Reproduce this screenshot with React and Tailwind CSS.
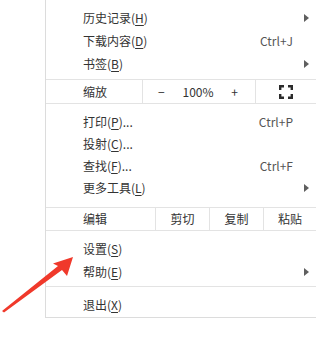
import React from 'react';

const font = { fontFamily: '"Noto Sans CJK SC", "Noto Sans", sans-serif' };

const Label = ({ text, k, dots }) => (
  <span>
    {text}(<span className="underline underline-offset-2">{k}</span>){dots ? '...' : ''}
  </span>
);

const Caret = () => (
  <svg width="5" height="8" viewBox="0 0 5 8" className="absolute right-[7px] top-1/2 -translate-y-1/2">
    <polygon points="0,0 5,4 0,8" fill="#5f5f5f" />
  </svg>
);

const Item = ({ text, k, dots, shortcut, sub, h = 'h-[23px]' }) => (
  <div className={`relative flex items-center justify-between pl-[37px] pr-[23px] ${h}`}>
    <Label text={text} k={k} dots={dots} />
    {shortcut && <span className="text-[#555]">{shortcut}</span>}
    {sub && <Caret />}
  </div>
);

const Sep = () => <div className="h-px bg-[#e3e3e3]" />;

const FullscreenIcon = () => (
  <svg width="14" height="14" viewBox="0 0 14 14" fill="none" stroke="#2b2b2b" strokeWidth="2.4">
    <path d="M1.2 5V1.2H5M9 1.2h3.8V5M12.8 9v3.8H9M5 12.8H1.2V9" />
  </svg>
);

const App = () => {
  return (
    <div className="relative w-[316px] h-[346px] bg-white overflow-hidden text-[12px] text-[#333]" style={font}>
      <div className="ml-[45px] w-[271px] border-l border-b border-[#dcdcdc]">
        <div className="pt-[6px] pb-[4px]">
          <Item text="历史记录" k="H" sub />
          <Item text="下载内容" k="D" shortcut="Ctrl+J" />
          <Item text="书签" k="B" sub />
        </div>
        <Sep />
        <div className="flex h-[23px] items-center">
          <div className="w-[96px] pl-[37px]">缩放</div>
          <div className="flex h-full w-[113px] items-center justify-between border-l border-[#e3e3e3] pl-[15px] pr-[17px]">
            <span>−</span>
            <span>100%</span>
            <span>+</span>
          </div>
          <div className="flex h-full flex-1 items-center justify-center border-l border-[#e3e3e3]">
            <FullscreenIcon />
          </div>
        </div>
        <Sep />
        <div className="pt-[7px] pb-[8px]">
          <Item text="打印" k="P" dots shortcut="Ctrl+P" h="h-[22px]" />
          <Item text="投射" k="C" dots h="h-[22px]" />
          <Item text="查找" k="F" dots shortcut="Ctrl+F" h="h-[22px]" />
          <Item text="更多工具" k="L" sub h="h-[22px]" />
        </div>
        <Sep />
        <div className="flex h-[22px] items-center">
          <div className="w-[109px] pl-[37px]">编辑</div>
          <div className="flex h-full w-[54px] items-center justify-center border-l border-[#e3e3e3]">剪切</div>
          <div className="flex h-full w-[54px] items-center justify-center border-l border-[#e3e3e3]">复制</div>
          <div className="flex h-full flex-1 items-center justify-center border-l border-[#e3e3e3]">粘贴</div>
        </div>
        <Sep />
        <div className="pt-[6px] pb-[3px]">
          <Item text="设置" k="S" />
          <Item text="帮助" k="E" sub />
        </div>
        <Sep />
        <div className="pt-[6px] pb-[1px]">
          <Item text="退出" k="X" />
        </div>
      </div>
      <svg className="pointer-events-none absolute left-0 top-0" width="80" height="320" viewBox="0 0 80 320">
        <polygon points="2,311 58,266 53,263.5 73,257 67,276 62,270 4,312.5" fill="#f0392b" />
      </svg>
    </div>
  );
};

export default App;
